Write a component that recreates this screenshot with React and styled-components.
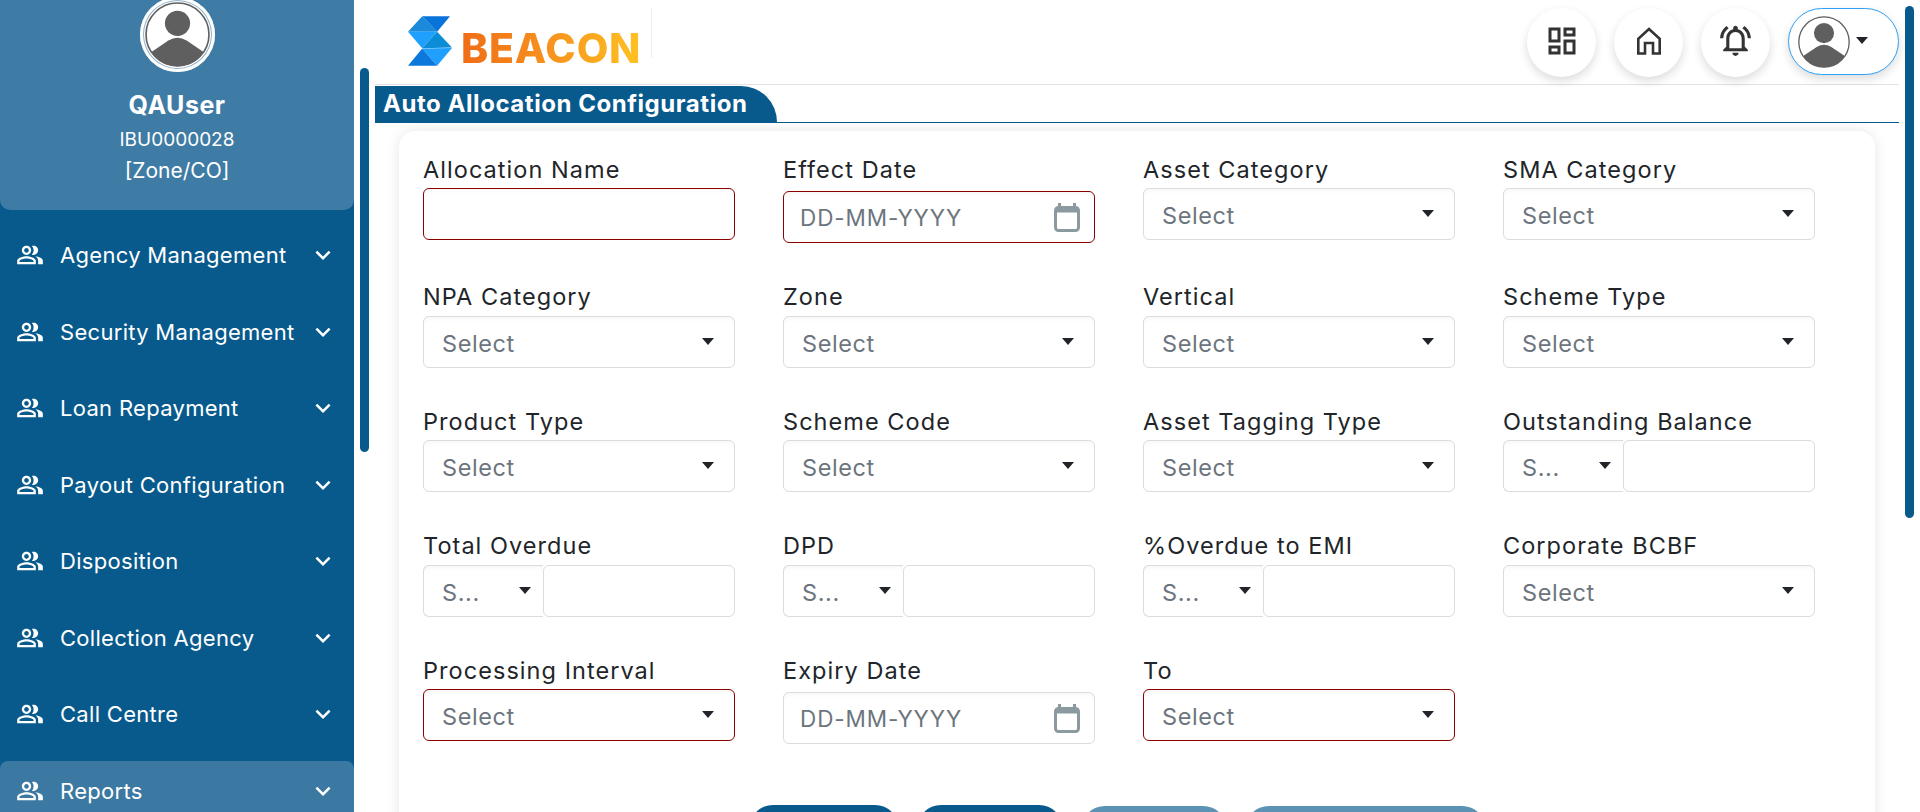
import styled, { createGlobalStyle } from "styled-components"
import {
  MdOutlineDashboard,
  MdOutlineNotificationsActive,
  MdOutlinePeopleAlt,
  MdKeyboardArrowDown,
} from "react-icons/md"

const BLUE = "#085a8c"

const GlobalStyle = createGlobalStyle`
  html, body {
    margin: 0;
    padding: 0;
    background: #fff;
  }
  body {
    font-family: Inter, "Liberation Sans", sans-serif;
    color: #212529;
    overflow: hidden;
  }
  * { box-sizing: border-box; }
`

const Page = styled.div`
  position: relative;
  display: flex;
  width: 1920px;
  height: 812px;
  overflow: hidden;
`

// left menu
const Sidebar = styled.aside`
  flex: 0 0 354px;
  height: 812px;
  background: ${BLUE};
  color: #fff;
`

const Profile = styled.div`
  height: 210px;
  margin-bottom: 15px;
  background: #3f7ca5;
  border-radius: 0 0 10px 10px;
  display: flex;
  flex-direction: column;
  align-items: center;
`

const AvatarRing = styled.div`
  width: 75px;
  height: 75px;
  margin-top: -3px;
  border-radius: 50%;
  background: #fff;
  box-shadow: inset 0 0 0 3px #fff, inset 0 0 0 4px #8fb2ca;
  display: flex;
  align-items: center;
  justify-content: center;
`

const UserName = styled.div`
  margin-top: 20px;
  font-size: 25px;
  line-height: 26px;
  font-weight: 700;
  letter-spacing: 0.5px;
`

const UserCode = styled.div`
  margin-top: 10px;
  font-size: 19px;
  line-height: 24px;
`

const UserRole = styled.div`
  margin-top: 7px;
  font-size: 21px;
  line-height: 24px;
`

const Menu = styled.nav`
  display: flex;
  flex-direction: column;
  gap: 16.5px;
`

const MenuItem = styled.div`
  height: 60px;
  display: flex;
  align-items: center;
  padding: 0 16px;
  border-radius: 8px 8px 0 0;
  background: ${(p) => (p.$active ? "#3b79a2" : "transparent")};
  font-size: 22px;
  letter-spacing: 0.3px;

  svg:first-child { flex: none; }
  span { flex: 1; margin-left: 16px; white-space: nowrap; }
  svg:last-child { flex: none; }
`

// right side
const Main = styled.main`
  flex: 0 0 1524px;
  margin-left: 21px;
`

const Header = styled.header`
  height: 85px;
  padding-left: 33px;
  border-bottom: 1px solid #e2e2e2;
  display: flex;
  align-items: flex-start;
  justify-content: space-between;
`

const Logo = styled.div`
  height: 50px;
  margin-top: 8px;
  padding-right: 10px;
  border-right: 1px solid #eee;
  display: flex;
  align-items: flex-end;
  gap: 9px;

  svg { margin-bottom: -9px; }
`

const LogoText = styled.span`
  font-size: 41px;
  line-height: 40px;
  margin-bottom: -10px;
  font-weight: 800;
  letter-spacing: 0.8px;
  background: linear-gradient(90deg, #ef6c17 0%, #f7931e 50%, #ffc222 100%);
  -webkit-background-clip: text;
  background-clip: text;
  color: transparent;
`

const Actions = styled.div`
  display: flex;
  gap: 18px;
  padding-top: 8px;
`

const RoundButton = styled.button`
  width: 69px;
  height: 69px;
  padding: 0 0 4px;
  border: none;
  border-radius: 50%;
  background: #fff;
  color: #333;
  box-shadow: 0 4px 10px rgba(0, 0, 0, 0.14);
  display: flex;
  align-items: center;
  justify-content: center;
`

const AvatarButton = styled.button`
  width: 111px;
  height: 67px;
  padding: 0 0 0 9px;
  border: 1px solid #2ea0f5;
  border-radius: 34px;
  background: #fff;
  box-shadow: 0 4px 10px rgba(0, 0, 0, 0.14);
  display: flex;
  align-items: center;
  gap: 6px;

  i { margin-top: -3px; }
`

const Caret = styled.i`
  display: block;
  flex: none;
  width: 0;
  height: 0;
  border-left: 6px solid transparent;
  border-right: 6px solid transparent;
  border-top: 7px solid #212529;
`

const TitleBar = styled.div`
  height: 37px;
  margin-top: 1px;
  border-bottom: 1.5px solid ${BLUE};
`

const Title = styled.h1`
  display: inline-block;
  width: 402px;
  height: 37px;
  margin: 0;
  padding-left: 8px;
  background: ${BLUE};
  color: #fff;
  border-radius: 0 36px 0 0;
  font-size: 24px;
  line-height: 36px;
  font-weight: 700;
  letter-spacing: 0.55px;
  white-space: nowrap;
`

const Card = styled.section`
  width: 1476px;
  margin: 8px 0 0 24px;
  padding: 26.5px 24px 40px;
  background: #fff;
  border-radius: 16px;
  box-shadow: 0 0 14px rgba(0, 0, 0, 0.1);
`

const FormGrid = styled.div`
  display: grid;
  grid-template-columns: repeat(4, 312px);
  column-gap: 48px;
  row-gap: 42px;
`

const FieldBox = styled.div`
  display: flex;
  flex-direction: column;
`

const Label = styled.label`
  display: block;
  height: 24px;
  margin-bottom: 6.5px;
  font-size: 23.5px;
  line-height: 24px;
  letter-spacing: 1.05px;
  white-space: nowrap;
`

const Control = styled.div`
  height: 52px;
  margin-top: ${(p) => (p.$date ? "3px" : "0")};
  padding: ${(p) => (p.$date ? "1px 14px 0 16px" : "3px 19px 0 18px")};
  border: 1px solid ${(p) => (p.$error ? "#8b0000" : "#dcdcdc")};
  border-radius: 6px;
  background: #fff;
  box-shadow: inset 0 5px 5px -3px rgba(0, 0, 0, 0.035);
  color: #6c757d;
  font-size: ${(p) => (p.$date ? "22.5px" : "23.5px")};
  letter-spacing: ${(p) => (p.$date ? "0.9px" : "0.6px")};
  display: flex;
  align-items: center;
  justify-content: space-between;
  ${Caret} { margin: -4px 1px 0 0; }
`

const SplitControl = styled.div`
  display: flex;
  height: 52px;
`

const SplitSelect = styled(Control)`
  flex: 0 0 120px;
  border-right: none;
  border-radius: 6px 0 0 6px;
  padding-right: 11px;
`

const SplitInput = styled.div`
  flex: 1;
  border: 1px solid #dcdcdc;
  border-radius: 6px;
`

const ButtonRow = styled.div`
  display: flex;
  gap: 18px;
  margin: 61px 0 0 326px;
`

const ActionButton = styled.button`
  width: ${(p) => p.$w}px;
  height: 48px;
  margin-top: ${(p) => (p.$muted ? "1px" : "0")};
  border: none;
  border-radius: 24px;
  background: ${(p) => (p.$muted ? "#5c93b5" : BLUE)};
`

const Scrollbar = styled.div`
  position: absolute;
  left: ${(p) => p.$left}px;
  top: ${(p) => p.$top}px;
  width: 9px;
  height: ${(p) => p.$h}px;
  border-radius: 5px;
  background: ${BLUE};
`

const Avatar = ({ size }) => (
  <svg width={size} height={size} viewBox="-32 -32 64 64">
    <circle r="31" fill="#fff" stroke="#5f5f5f" strokeWidth="1.6" />
    <circle cx="0" cy="-11" r="12.4" fill="#5f5f5f" />
    <path d="M-25.6 17.2 L-9 6 Q0 0.6 9 6 L25.6 17.2 A30.4 30.4 0 0 1 -25.6 17.2 Z" fill="#5f5f5f" />
  </svg>
)

const LogoMark = () => (
  <svg width="44" height="52" viewBox="15 15 133 150">
    <polygon points="58,15 15,62 103,62" fill="#1b8ada" />
    <polygon points="58,15 142,15 103,62" fill="#0873d8" />
    <polygon points="15,62 103,62 58,112" fill="#1fa0ff" />
    <polygon points="103,62 148,110 58,112" fill="#0a8cd6" />
    <polygon points="58,113 148,111 103,165" fill="#1fa0ff" />
    <polygon points="58,113 15,165 103,165" fill="#0c78dc" />
  </svg>
)

const CalendarIcon = () => (
  <svg width="26" height="29" viewBox="0 0 26 29">
    <rect x="4" y="0" width="3" height="6" fill="#8a9a9f" />
    <rect x="19" y="0" width="3" height="6" fill="#8a9a9f" />
    <rect x="1.5" y="4.5" width="23" height="23" rx="3" fill="#fff" stroke="#8a9a9f" strokeWidth="3" />
    <rect x="1.5" y="4.5" width="23" height="5" fill="#8a9a9f" />
  </svg>
)

const HomeIcon = () => (
  <svg width="26" height="28" viewBox="0 0 26 28" fill="none" stroke="#333" strokeWidth="2.6" strokeLinejoin="miter">
    <path d="M13 2 L2.3 11.8 V26.5 H9 V16 H17 V26.5 H23.7 V11.8 Z" />
  </svg>
)

const menuItems = [
  "Agency Management",
  "Security Management",
  "Loan Repayment",
  "Payout Configuration",
  "Disposition",
  "Collection Agency",
  "Call Centre",
  "Reports",
]

const fields = [
  { label: "Allocation Name", kind: "input", error: true },
  { label: "Effect Date", kind: "date", error: true },
  { label: "Asset Category" },
  { label: "SMA Category" },
  { label: "NPA Category" },
  { label: "Zone" },
  { label: "Vertical" },
  { label: "Scheme Type" },
  { label: "Product Type" },
  { label: "Scheme Code" },
  { label: "Asset Tagging Type" },
  { label: "Outstanding Balance", kind: "split" },
  { label: "Total Overdue", kind: "split" },
  { label: "DPD", kind: "split" },
  { label: "%Overdue to EMI", kind: "split" },
  { label: "Corporate BCBF" },
  { label: "Processing Interval", error: true },
  { label: "Expiry Date", kind: "date" },
  { label: "To", error: true },
]

const Field = ({ label, kind, error }) => (
  <FieldBox>
    <Label>{label}</Label>
    {kind === "input" && <Control $error={error} />}
    {kind === "date" && (
      <Control $date $error={error}>
        DD-MM-YYYY
        <CalendarIcon />
      </Control>
    )}
    {kind === "split" && (
      <SplitControl>
        <SplitSelect>
          S...
          <Caret />
        </SplitSelect>
        <SplitInput />
      </SplitControl>
    )}
    {!kind && (
      <Control $error={error}>
        Select
        <Caret />
      </Control>
    )}
  </FieldBox>
)

export default function App() {
  return (
    <Page>
      <GlobalStyle />
      <Sidebar>
        <Profile>
          <AvatarRing>
            <Avatar size={65} />
          </AvatarRing>
          <UserName>QAUser</UserName>
          <UserCode>IBU0000028</UserCode>
          <UserRole>[Zone/CO]</UserRole>
        </Profile>
        <Menu>
          {menuItems.map((item) => (
            <MenuItem key={item} $active={item === "Reports"}>
              <MdOutlinePeopleAlt size={28} />
              <span>{item}</span>
              <MdKeyboardArrowDown size={30} />
            </MenuItem>
          ))}
        </Menu>
      </Sidebar>
      <Main>
        <Header>
          <Logo>
            <LogoMark />
            <LogoText>BEACON</LogoText>
          </Logo>
          <Actions>
            <RoundButton><MdOutlineDashboard size={36} /></RoundButton>
            <RoundButton><HomeIcon /></RoundButton>
            <RoundButton><MdOutlineNotificationsActive size={37} /></RoundButton>
            <AvatarButton>
              <Avatar size={52} />
              <Caret />
            </AvatarButton>
          </Actions>
        </Header>
        <TitleBar>
          <Title>Auto Allocation Configuration</Title>
        </TitleBar>
        <Card>
          <FormGrid>
            {fields.map((f) => (
              <Field key={f.label} {...f} />
            ))}
          </FormGrid>
          <ButtonRow>
            <ActionButton $w={150} />
            <ActionButton $w={146} />
            <ActionButton $w={146} $muted />
            <ActionButton $w={241} $muted />
          </ButtonRow>
        </Card>
      </Main>
      <Scrollbar $left={360} $top={68} $h={384} />
      <Scrollbar $left={1905} $top={6} $h={512} />
    </Page>
  )
}
